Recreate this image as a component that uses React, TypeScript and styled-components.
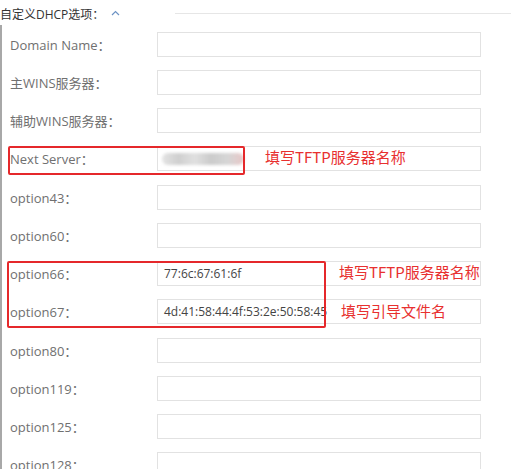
import styled, { createGlobalStyle } from "styled-components"

const GlobalStyle = createGlobalStyle`
    html, body {
        margin: 0;
        padding: 0;
        background: #fff;
    }
    body {
        width: 511px;
        height: 469px;
        overflow: hidden;
        font-family: "Open Sans", "Noto Sans CJK SC", sans-serif;
    }
`

type Row = { label: string, value?: string, blurred?: boolean, note?: string }

const ROWS: Row[] = [
    { label: "Domain Name" },
    { label: "主WINS服务器" },
    { label: "辅助WINS服务器" },
    { label: "Next Server", blurred: true },
    { label: "option43" },
    { label: "option60" },
    { label: "option66", value: "77:6c:67:61:6f" },
    { label: "option67", value: "4d:41:58:44:4f:53:2e:50:58:45" },
    { label: "option80" },
    { label: "option119" },
    { label: "option125" },
    { label: "option128" },
]

export default function App() {
    return <RootDiv>
        <GlobalStyle/>
        <HeaderDiv>
            <span className="title">自定义DHCP选项：</span>
            <svg className="caret" width="9" height="6" viewBox="0 0 9 6">
                <path d="M1 5 L4.5 1.5 L8 5" fill="none" stroke="#6d93c4" strokeWidth="1.2"/>
            </svg>
            <div className="line"/>
        </HeaderDiv>
        <FormDiv>
            {ROWS.map(row => <FieldRow key={row.label}>
                <label>{row.label}：</label>
                <InputBox>
                    {row.value}
                    {row.blurred && <BlurBlob/>}
                </InputBox>
            </FieldRow>)}
            <MarkBox style={{ left: 6, top: 121, width: 237, height: 29 }}/>
            <MarkBox style={{ left: 5, top: 236, width: 319, height: 67 }}/>
            <Note style={{ left: 263, top: 122 }}>填写TFTP服务器名称</Note>
            <Note style={{ left: 337, top: 237 }}>填写TFTP服务器名称</Note>
            <Note style={{ left: 339, top: 276 }}>填写引导文件名</Note>
        </FormDiv>
    </RootDiv>
}

const RootDiv = styled.div`
    width: 511px;
    height: 469px;
    overflow: hidden;
`

const HeaderDiv = styled.div`
    display: flex;
    align-items: center;
    height: 25px;
    padding: 2px 0 0 0;
    box-sizing: border-box;
    > .title {
        font-size: 12px;
        color: #333;
        white-space: nowrap;
    }
    > .caret {
        flex: 0 0 auto;
        margin: 0 0 2px 7px;
    }
    > .line {
        flex: 1;
        height: 1px;
        margin-left: 55px;
        background: #e6e6e6;
    }
`

const FormDiv = styled.div`
    position: relative;
    border-left: 2px solid #a8a8a8;
`

const FieldRow = styled.div`
    display: flex;
    align-items: center;
    height: 38.25px;
    > label {
        flex: 0 0 147px;
        padding-left: 8px;
        font-size: 13px;
        color: #707070;
        white-space: nowrap;
    }
`

const InputBox = styled.div`
    position: relative;
    display: flex;
    align-items: center;
    box-sizing: border-box;
    width: 324px;
    height: 25px;
    padding-left: 6px;
    border: 1px solid #e2e2e2;
    background: #fff;
    font-size: 12px;
    color: #444;
    white-space: nowrap;
`

const BlurBlob = styled.div`
    position: absolute;
    left: 4px;
    top: 6px;
    width: 82px;
    height: 12px;
    border-radius: 6px;
    background: linear-gradient(90deg, #e4e4e4 0%, #cfcfcf 20%, #e0e0e0 40%, #cbcbcb 60%, #d6d6d6 80%, #e8c6c6 100%);
    filter: blur(1.5px);
`

const MarkBox = styled.div`
    position: absolute;
    box-sizing: border-box;
    border: 2px solid #e5282b;
    border-radius: 2px;
    pointer-events: none;
`

const Note = styled.div`
    position: absolute;
    font-family: "Noto Sans CJK SC", sans-serif;
    font-size: 15px;
    line-height: 20px;
    color: #e8302f;
    white-space: nowrap;
`
